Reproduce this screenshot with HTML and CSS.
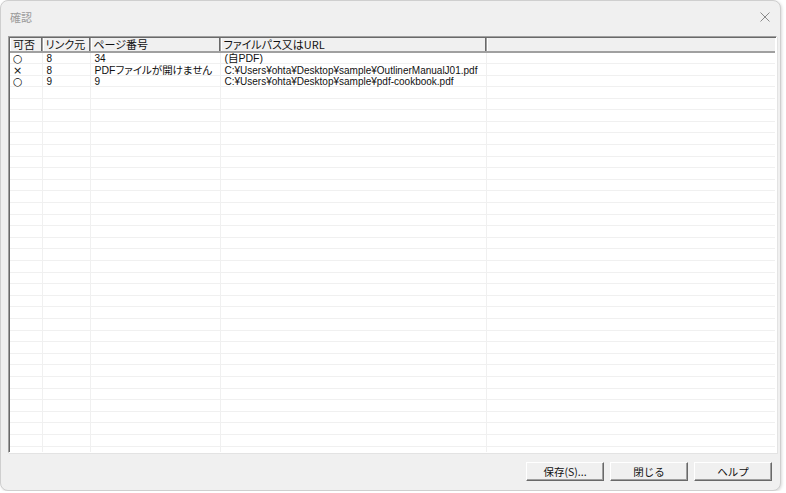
FILE: index.html
```html
<!DOCTYPE html>
<html lang="ja">
<head>
    <meta charset="UTF-8">
    <title>確認</title>
    <link rel="stylesheet" href="styles.css">
</head>
<body>
    <div class="window">
        <div class="title-bar">
            <span class="title">確認</span>
            <button class="close-btn" aria-label="閉じる">
                <svg width="10" height="10" viewBox="0 0 10 10">
                    <path d="M0.5 0.5 L9.5 9.5 M9.5 0.5 L0.5 9.5" stroke="#8a8a8a" stroke-width="1" fill="none"/>
                </svg>
            </button>
        </div>

        <div class="list-box">
            <table class="link-list">
                <colgroup>
                    <col class="col-ok">
                    <col class="col-src">
                    <col class="col-page">
                    <col class="col-path">
                    <col class="col-rest">
                </colgroup>
                <thead>
                    <tr>
                        <th>可否</th>
                        <th>リンク元</th>
                        <th>ページ番号</th>
                        <th>ファイルパス又はURL</th>
                        <th></th>
                    </tr>
                </thead>
                <tbody>
                    <tr class="row">
                        <td class="mark">○</td>
                        <td>8</td>
                        <td>34</td>
                        <td class="ja">(自PDF)</td>
                        <td></td>
                    </tr>
                    <tr class="row">
                        <td class="mark">×</td>
                        <td>8</td>
                        <td class="ja">PDFファイルが開けません</td>
                        <td>C:¥Users¥ohta¥Desktop¥sample¥OutlinerManualJ01.pdf</td>
                        <td></td>
                    </tr>
                    <tr class="row">
                        <td class="mark">○</td>
                        <td>9</td>
                        <td>9</td>
                        <td>C:¥Users¥ohta¥Desktop¥sample¥pdf-cookbook.pdf</td>
                        <td></td>
                    </tr>
                    <tr class="filler">
                        <td></td>
                        <td></td>
                        <td></td>
                        <td></td>
                        <td></td>
                    </tr>
                </tbody>
            </table>
        </div>

        <div class="footer">
            <button class="btn">保存(S)...</button>
            <button class="btn">閉じる</button>
            <button class="btn">ヘルプ</button>
        </div>
    </div>
</body>
</html>
```

FILE: styles.css
```css
:root {
    --face: #f0f0f0;
    --shadow: #a0a0a0;
    --dark-shadow: #696969;
    --grid: #f0f0f0;
    --row-height: 11.6px;
}

body {
    margin: 0;
    background-color: #fff;
    font-family: "Liberation Sans", "Noto Sans CJK JP", sans-serif;
    font-feature-settings: "palt";
    color: #000;
}

.window {
    width: 779px;
    height: 489px;
    background-color: var(--face);
    border: 1px solid #cfcfcf;
    border-radius: 8px;
    box-shadow: 1px 1px 3px rgba(0, 0, 0, 0.15);
    display: flex;
    flex-direction: column;
    overflow: hidden;
}

.title-bar {
    height: 35px;
    display: flex;
    align-items: center;
    justify-content: space-between;
    padding: 0 9px 4px 9px;
    box-sizing: border-box;
}

.title {
    font-family: "Noto Sans CJK JP", sans-serif;
    font-size: 11px;
    color: #9b9b9b;
}

.close-btn {
    border: none;
    background: none;
    padding: 0;
    margin-right: 1px;
    display: flex;
}

.list-box {
    margin: 0 3px 0 7px;
    height: 417px;
    background-color: #fff;
    border-top: 1px solid var(--shadow);
    border-left: 1px solid var(--shadow);
    border-right: 1px solid #fff;
    border-bottom: 1px solid #fff;
    box-shadow: inset 1px 1px 0 var(--dark-shadow), 1px 1px 0 #e3e3e3;
    box-sizing: border-box;
    padding: 1px 1px 0 1px;
    overflow: hidden;
}

.link-list {
    width: 100%;
    height: 100%;
    border-collapse: collapse;
    table-layout: fixed;
    font-size: 10px;
    color: #111;
}

.col-ok { width: 32px; }
.col-src { width: 48px; }
.col-page { width: 130px; }
.col-path { width: 266px; }

.link-list th {
    height: 13px;
    padding: 0 0 0 3px;
    background-color: var(--face);
    font-family: "Noto Sans CJK JP", sans-serif;
    font-size: 11px;
    font-weight: normal;
    line-height: 13px;
    text-align: left;
    white-space: nowrap;
    border-right: 1px solid var(--shadow);
    border-bottom: 2px solid var(--shadow);
    box-shadow: inset -1px 0 0 var(--dark-shadow), inset 1px 0 0 #fff;
}

.link-list th:last-child {
    border-right: none;
    box-shadow: inset 1px 0 0 #fff;
}

.link-list tbody {
    background-image: repeating-linear-gradient(
        to bottom,
        transparent 0,
        transparent 10.6px,
        var(--grid) 10.6px,
        var(--grid) 11.6px
    );
}

.link-list td {
    padding: 0 0 0 4px;
    line-height: var(--row-height);
    white-space: nowrap;
    border-right: 1px solid var(--grid);
    vertical-align: top;
}

.link-list td:last-child {
    border-right: none;
}

.row {
    height: var(--row-height);
}

.link-list td.ja {
    font-size: 10.5px;
}

.link-list td.mark {
    font-family: "DejaVu Sans", sans-serif;
    font-size: 11px;
    padding-left: 3px;
}

.footer {
    display: flex;
    justify-content: flex-end;
    gap: 6px;
    padding: 9px 8px 0 0;
}

.btn {
    width: 78px;
    height: 19px;
    padding: 0;
    background-color: var(--face);
    font-family: "Noto Sans CJK JP", sans-serif;
    font-size: 10.5px;
    line-height: 17px;
    color: #111;
    border-top: 1px solid #fff;
    border-left: 1px solid #fff;
    border-right: 1px solid var(--dark-shadow);
    border-bottom: 1px solid var(--dark-shadow);
    box-shadow: inset -1px -1px 0 var(--shadow);
}
```
